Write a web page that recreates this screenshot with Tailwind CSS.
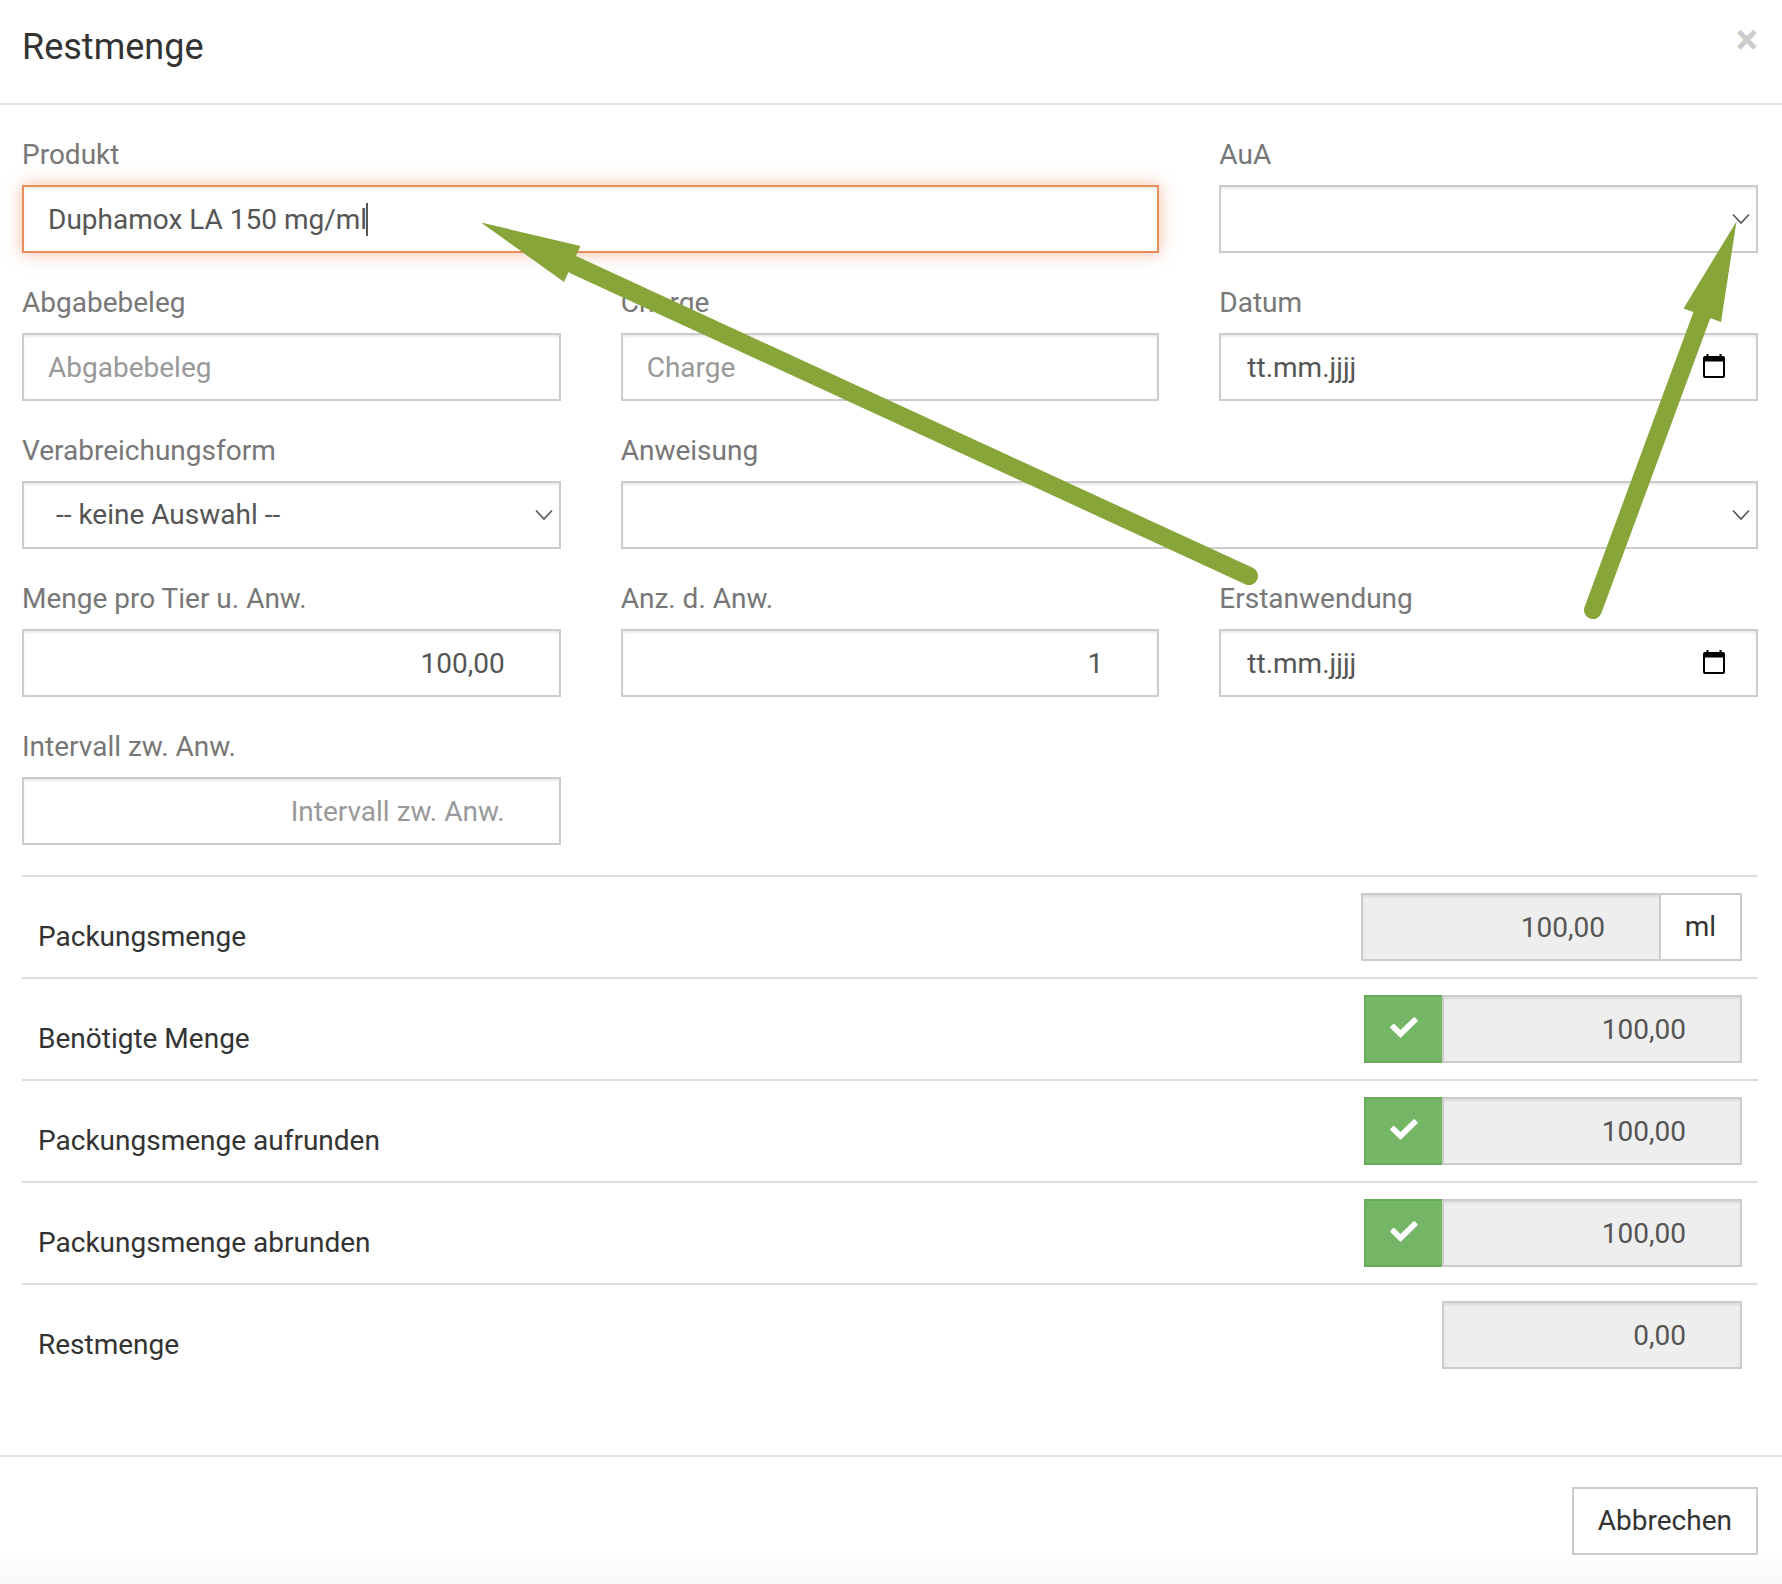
<!DOCTYPE html>
<html lang="de">
<head>
<meta charset="utf-8">
<meta name="viewport" content="width=device-width, initial-scale=1">
<title>Restmenge</title>
<script src="https://cdn.jsdelivr.net/npm/@tailwindcss/browser@4"></script>
</head>
<body class="bg-white font-['Roboto',sans-serif] text-[28px] leading-10 text-[#333]">
<div role="dialog" aria-labelledby="dialog-title" class="relative flex min-h-screen flex-col">

  <header class="flex items-start justify-between border-b-2 border-[#e5e5e5] pt-6 pr-6 pb-8 pl-[22px]">
    <h1 id="dialog-title" class="text-4xl leading-[47px]">Restmenge</h1>
    <button type="button" aria-label="Schließen" class="text-[42px] leading-8 font-bold text-[#ccc]">×</button>
  </header>

  <main class="pt-[30px] pr-6 pb-[70px] pl-[22px]">
    <form class="grid grid-cols-3 gap-x-[60px] gap-y-[30px]">
      <div class="col-span-2 flex flex-col gap-[10px]">
        <label for="produkt" class="text-[#777]">Produkt</label>
        <div class="relative">
          <input id="produkt" type="text" value="Duphamox LA 150 mg/ml" class="block h-[68px] w-full border-2 border-[#e78f5a] bg-white px-6 text-[#555] shadow-[inset_0_2px_2px_rgba(0,0,0,0.075),0_0_16px_rgba(231,120,70,0.5)] outline-none">
          <span class="absolute top-[18px] left-[344px] h-[33px] w-[2px] bg-[#555]"></span>
        </div>
      </div>
      <div class="flex flex-col gap-[10px]">
        <label for="aua" class="text-[#777]">AuA</label>
        <div class="relative">
          <select id="aua" class="block h-[68px] w-full appearance-none border-2 border-[#ccc] bg-white px-8 text-[#555] shadow-[inset_0_2px_2px_rgba(0,0,0,0.075)]"><option></option></select>
          <svg class="pointer-events-none absolute top-[28px] right-[7px] h-3 w-5" viewBox="0 0 20 12" fill="none" stroke="#555" stroke-width="1.600"><path d="M2 1.500l8 8.500 8-8.500"/></svg>
        </div>
      </div>

      <div class="flex flex-col gap-[10px]">
        <label for="beleg" class="text-[#777]">Abgabebeleg</label>
        <input id="beleg" type="text" placeholder="Abgabebeleg" class="h-[68px] w-full border-2 border-[#ccc] bg-white px-6 text-[#555] shadow-[inset_0_2px_2px_rgba(0,0,0,0.075)] placeholder:text-[#999]">
      </div>
      <div class="flex flex-col gap-[10px]">
        <label for="charge" class="text-[#777]">Charge</label>
        <input id="charge" type="text" placeholder="Charge" class="h-[68px] w-full border-2 border-[#ccc] bg-white px-6 text-[#555] shadow-[inset_0_2px_2px_rgba(0,0,0,0.075)] placeholder:text-[#999]">
      </div>
      <div class="flex flex-col gap-[10px]">
        <label for="datum" class="text-[#777]">Datum</label>
        <div class="relative">
          <input id="datum" type="text" placeholder="tt.mm.jjjj" class="block h-[68px] w-full border-2 border-[#ccc] bg-white px-[26px] text-[#555] shadow-[inset_0_2px_2px_rgba(0,0,0,0.075)] placeholder:text-[#555]">
          <svg class="pointer-events-none absolute top-[21px] right-[33px] h-6 w-[22px]" viewBox="0 0 22 24"><path fill="#000" fill-rule="evenodd" d="M3.500 0h2v2h11V0h2v2H20a2 2 0 0 1 2 2v18a2 2 0 0 1-2 2H2a2 2 0 0 1-2-2V4a2 2 0 0 1 2-2h1.500zM2 7.500V22h18V7.500z"/></svg>
        </div>
      </div>

      <div class="flex flex-col gap-[10px]">
        <label for="form" class="text-[#777]">Verabreichungsform</label>
        <div class="relative">
          <select id="form" class="block h-[68px] w-full appearance-none border-2 border-[#ccc] bg-white px-8 text-[#555] shadow-[inset_0_2px_2px_rgba(0,0,0,0.075)]"><option>-- keine Auswahl --</option></select>
          <svg class="pointer-events-none absolute top-[28px] right-[7px] h-3 w-5" viewBox="0 0 20 12" fill="none" stroke="#555" stroke-width="1.600"><path d="M2 1.500l8 8.500 8-8.500"/></svg>
        </div>
      </div>
      <div class="col-span-2 flex flex-col gap-[10px]">
        <label for="anweisung" class="text-[#777]">Anweisung</label>
        <div class="relative">
          <select id="anweisung" class="block h-[68px] w-full appearance-none border-2 border-[#ccc] bg-white px-8 text-[#555] shadow-[inset_0_2px_2px_rgba(0,0,0,0.075)]"><option></option></select>
          <svg class="pointer-events-none absolute top-[28px] right-[7px] h-3 w-5" viewBox="0 0 20 12" fill="none" stroke="#555" stroke-width="1.600"><path d="M2 1.500l8 8.500 8-8.500"/></svg>
        </div>
      </div>

      <div class="flex flex-col gap-[10px]">
        <label for="menge" class="text-[#777]">Menge pro Tier u. Anw.</label>
        <input id="menge" type="text" inputmode="decimal" value="100,00" class="h-[68px] w-full border-2 border-[#ccc] bg-white pr-[54px] pl-6 text-right text-[#555] shadow-[inset_0_2px_2px_rgba(0,0,0,0.075)]">
      </div>
      <div class="flex flex-col gap-[10px]">
        <label for="anzahl" class="text-[#777]">Anz. d. Anw.</label>
        <input id="anzahl" type="text" inputmode="numeric" value="1" class="h-[68px] w-full border-2 border-[#ccc] bg-white pr-[54px] pl-6 text-right text-[#555] shadow-[inset_0_2px_2px_rgba(0,0,0,0.075)]">
      </div>
      <div class="flex flex-col gap-[10px]">
        <label for="erst" class="text-[#777]">Erstanwendung</label>
        <div class="relative">
          <input id="erst" type="text" placeholder="tt.mm.jjjj" class="block h-[68px] w-full border-2 border-[#ccc] bg-white px-[26px] text-[#555] shadow-[inset_0_2px_2px_rgba(0,0,0,0.075)] placeholder:text-[#555]">
          <svg class="pointer-events-none absolute top-[21px] right-[33px] h-6 w-[22px]" viewBox="0 0 22 24"><path fill="#000" fill-rule="evenodd" d="M3.500 0h2v2h11V0h2v2H20a2 2 0 0 1 2 2v18a2 2 0 0 1-2 2H2a2 2 0 0 1-2-2V4a2 2 0 0 1 2-2h1.500zM2 7.500V22h18V7.500z"/></svg>
        </div>
      </div>

      <div class="flex flex-col gap-[10px]">
        <label for="intervall" class="text-[#777]">Intervall zw. Anw.</label>
        <input id="intervall" type="text" placeholder="Intervall zw. Anw." class="h-[68px] w-full border-2 border-[#ccc] bg-white pr-[54px] pl-6 text-right text-[#555] shadow-[inset_0_2px_2px_rgba(0,0,0,0.075)] placeholder:text-[#999]">
      </div>
    </form>

    <table class="mt-[30px] w-full border-separate border-spacing-0">
      <tbody>
        <tr>
          <th scope="row" class="border-t-2 border-[#ddd] pt-5 pl-4 text-left align-middle font-normal"><label for="packung">Packungsmenge</label></th>
          <td class="border-t-2 border-[#ddd] p-4">
            <div class="flex justify-end">
              <input id="packung" type="text" readonly value="100,00" class="h-[68px] w-[300px] border-2 border-[#ccc] bg-[#eee] pr-[54px] pl-6 text-right text-[#555] shadow-[inset_0_2px_2px_rgba(0,0,0,0.075)]">
              <span class="flex h-[68px] w-[81px] items-center justify-center border-2 border-l-0 border-[#ccc] bg-white">ml</span>
            </div>
          </td>
        </tr>
        <tr>
          <th scope="row" class="border-t-2 border-[#ddd] pt-5 pl-4 text-left align-middle font-normal"><label for="benoetigt">Benötigte Menge</label></th>
          <td class="border-t-2 border-[#ddd] p-4">
            <div class="flex justify-end">
              <button type="button" aria-label="Benötigte Menge übernehmen" class="flex h-[68px] w-[78px] items-center justify-center border-2 border-r-0 border-[#67ad59] bg-[#75b666] pb-[3px]"><svg class="h-[21px] w-7" viewBox="0 0 28 21"><path fill="#fff" d="M10.500 21 0.600 11.200Q-.2 10.400.6 9.600L3 7.200Q3.800 6.500 4.600 7.200L10.500 13 23.400.6Q24.200-.2 25 .6L27.400 3Q28.200 3.800 27.400 4.600Z"/></svg></button>
              <input id="benoetigt" type="text" readonly value="100,00" class="h-[68px] w-[300px] border-2 border-[#ccc] bg-[#eee] pr-[54px] pl-6 text-right text-[#555] shadow-[inset_0_2px_2px_rgba(0,0,0,0.075)]">
            </div>
          </td>
        </tr>
        <tr>
          <th scope="row" class="border-t-2 border-[#ddd] pt-5 pl-4 text-left align-middle font-normal"><label for="aufrunden">Packungsmenge aufrunden</label></th>
          <td class="border-t-2 border-[#ddd] p-4">
            <div class="flex justify-end">
              <button type="button" aria-label="Packungsmenge aufrunden" class="flex h-[68px] w-[78px] items-center justify-center border-2 border-r-0 border-[#67ad59] bg-[#75b666] pb-[3px]"><svg class="h-[21px] w-7" viewBox="0 0 28 21"><path fill="#fff" d="M10.500 21 0.600 11.200Q-.2 10.400.6 9.600L3 7.200Q3.800 6.500 4.600 7.200L10.500 13 23.400.6Q24.200-.2 25 .6L27.400 3Q28.200 3.800 27.400 4.600Z"/></svg></button>
              <input id="aufrunden" type="text" readonly value="100,00" class="h-[68px] w-[300px] border-2 border-[#ccc] bg-[#eee] pr-[54px] pl-6 text-right text-[#555] shadow-[inset_0_2px_2px_rgba(0,0,0,0.075)]">
            </div>
          </td>
        </tr>
        <tr>
          <th scope="row" class="border-t-2 border-[#ddd] pt-5 pl-4 text-left align-middle font-normal"><label for="abrunden">Packungsmenge abrunden</label></th>
          <td class="border-t-2 border-[#ddd] p-4">
            <div class="flex justify-end">
              <button type="button" aria-label="Packungsmenge abrunden" class="flex h-[68px] w-[78px] items-center justify-center border-2 border-r-0 border-[#67ad59] bg-[#75b666] pb-[3px]"><svg class="h-[21px] w-7" viewBox="0 0 28 21"><path fill="#fff" d="M10.500 21 0.600 11.200Q-.2 10.400.6 9.600L3 7.200Q3.800 6.500 4.600 7.200L10.500 13 23.400.6Q24.200-.2 25 .6L27.400 3Q28.200 3.800 27.400 4.600Z"/></svg></button>
              <input id="abrunden" type="text" readonly value="100,00" class="h-[68px] w-[300px] border-2 border-[#ccc] bg-[#eee] pr-[54px] pl-6 text-right text-[#555] shadow-[inset_0_2px_2px_rgba(0,0,0,0.075)]">
            </div>
          </td>
        </tr>
        <tr>
          <th scope="row" class="border-t-2 border-[#ddd] pt-5 pl-4 text-left align-middle font-normal"><label for="rest">Restmenge</label></th>
          <td class="border-t-2 border-[#ddd] p-4">
            <div class="flex justify-end">
              <input id="rest" type="text" readonly value="0,00" class="h-[68px] w-[300px] border-2 border-[#ccc] bg-[#eee] pr-[54px] pl-6 text-right text-[#555] shadow-[inset_0_2px_2px_rgba(0,0,0,0.075)]">
            </div>
          </td>
        </tr>
      </tbody>
    </table>
  </main>

  <footer class="flex grow flex-col border-t-2 border-[#e5e5e5] bg-linear-to-t from-[#f8f8f8] to-white to-[32px]">
    <div class="flex justify-end pt-[30px] pr-6 pb-[29px]">
      <button type="button" class="h-[68px] border-2 border-[#ccc] bg-white px-6">Abbrechen</button>
    </div>
  </footer>

  <!-- Hinweispfeile -->
  <svg class="pointer-events-none absolute top-0 left-0 h-auto w-full" viewBox="0 0 1782 1584" fill="#88a53a" stroke="#88a53a" aria-hidden="true">
    <path stroke="none" d="M481 222.500 580.500 246 564 282Z"/>
    <path stroke-width="18" stroke-linecap="round" d="M574 265 1249 576"/>
    <path stroke="none" d="M1736.500 221.500 1683.500 308.500 1721 322Z"/>
    <path stroke-width="18" stroke-linecap="round" d="M1703 312 1593 610"/>
  </svg>
</div>
</body>
</html>
